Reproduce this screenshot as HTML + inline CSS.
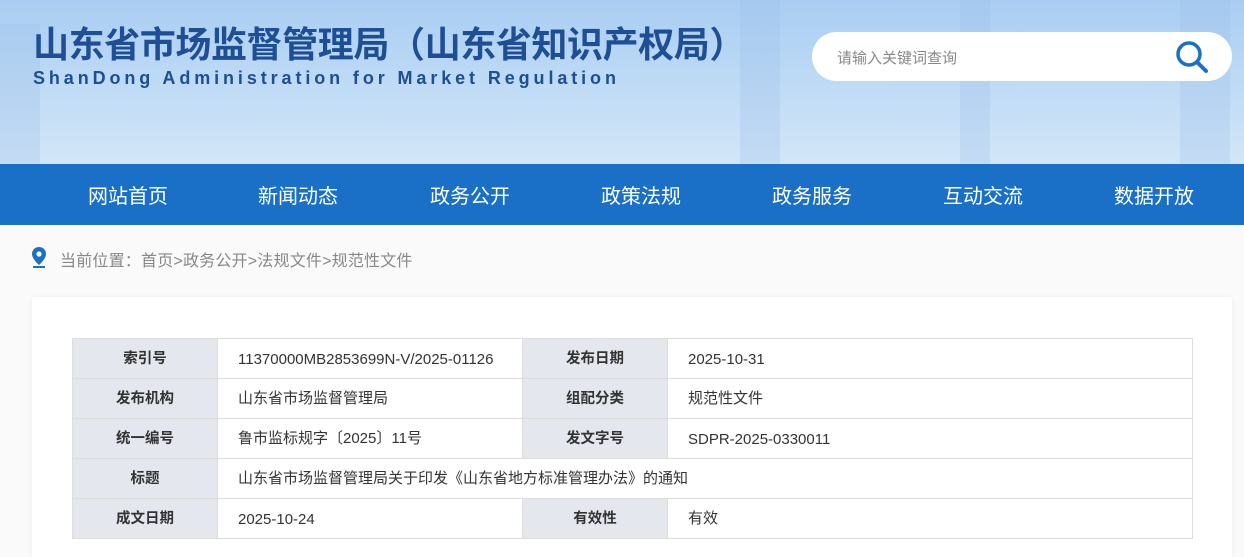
<!DOCTYPE html>
<html><head><meta charset="utf-8"><style>
*{margin:0;padding:0;box-sizing:border-box}
body{width:1244px;height:546px;overflow:hidden;background:#fafafa;font-family:"Liberation Sans","Noto Sans CJK SC",sans-serif;position:relative}
.hd{position:absolute;left:0;top:0;width:1244px;height:164px;background:linear-gradient(180deg,#a9cdf2 0%,#bcd9f5 45%,#d3e6f8 100%)}
.city{position:absolute;bottom:0;background:rgba(150,188,230,.25)}
.t1{position:absolute;left:33px;top:16px;font-size:36px;font-weight:bold;color:#1e4e93;letter-spacing:-0.4px;white-space:nowrap}
.t2{position:absolute;left:33px;top:68px;font-size:18px;font-weight:bold;color:#1e4e93;letter-spacing:3.9px;white-space:nowrap}
.sr{position:absolute;left:812px;top:32px;width:420px;height:49px;background:#fff;border-radius:25px}
.sr span{position:absolute;left:25px;top:15px;font-size:15px;color:#888}
.sr svg{position:absolute;right:22px;top:7px}
.nav{position:absolute;left:0;top:164px;width:1244px;height:61px;background:#1a70c6}
.nav span{position:absolute;top:16px;font-size:20px;color:#fff}
.bc{position:absolute;left:60px;top:247px;font-size:16px;letter-spacing:0.2px;color:#888}
.card{position:absolute;left:32px;top:297px;width:1200px;height:260px;background:#fff;box-shadow:0 0 6px rgba(0,0,0,.06)}
table{position:absolute;left:72px;top:338px;border-collapse:collapse;font-size:15px;color:#333}
td{height:40px;border:1px solid #ddd;padding:0 20px;line-height:20px;vertical-align:middle}
td.k{background:#e4e8ee;text-align:center;font-weight:bold;padding:0;font-size:14.5px}
.n{display:inline-block;vertical-align:middle;line-height:20px;position:relative;top:1px}
</style></head><body>
<div class="hd">
<div class="city" style="left:0;width:40px;height:140px"></div>
<div class="city" style="left:740px;width:40px;height:164px"></div>
<div class="city" style="left:960px;width:30px;height:164px"></div>
<div class="city" style="left:1180px;width:50px;height:164px"></div>
<div class="t1">山东省市场监督管理局（山东省知识产权局）</div>
<div class="t2">ShanDong Administration for Market Regulation</div>
<div class="sr"><span>请输入关键词查询</span><svg width="36" height="36" viewBox="0 0 36 36"><circle cx="15" cy="15" r="11" fill="none" stroke="#1a70c6" stroke-width="3.5"/><path d="M23 23l9 9" stroke="#1a70c6" stroke-width="4" stroke-linecap="round"/></svg></div>
</div>
<div class="nav">
<span style="left:88px">网站首页</span><span style="left:258px">新闻动态</span><span style="left:430px">政务公开</span><span style="left:601px">政策法规</span><span style="left:772px">政务服务</span><span style="left:943px">互动交流</span><span style="left:1114px">数据开放</span>
</div>
<svg style="position:absolute;left:30px;top:246px" width="18" height="22" viewBox="0 0 18 22"><path d="M9 1a7 7 0 0 0-7 7c0 5 7 11 7 11s7-6 7-11a7 7 0 0 0-7-7z" fill="#1a70c6"/><circle cx="9" cy="8" r="2.6" fill="#fff"/><rect x="3" y="20" width="12" height="2" fill="#1a70c6"/></svg>
<div class="bc">当前位置：首页&gt;政务公开&gt;法规文件&gt;规范性文件</div>
<div class="card"></div>
<table>
<tr><td class="k" style="width:145px">索引号</td><td style="width:305px;white-space:nowrap"><span class="n">11370000MB2853699N-V/2025-01126</span></td><td class="k" style="width:145px">发布日期</td><td style="width:525px"><span class="n">2025-10-31</span></td></tr>
<tr><td class="k">发布机构</td><td>山东省市场监督管理局</td><td class="k">组配分类</td><td>规范性文件</td></tr>
<tr><td class="k">统一编号</td><td>鲁市监标规字〔2025〕11号</td><td class="k">发文字号</td><td><span class="n">SDPR-2025-0330011</span></td></tr>
<tr><td class="k">标题</td><td colspan="3">山东省市场监督管理局关于印发《山东省地方标准管理办法》的通知</td></tr>
<tr><td class="k">成文日期</td><td><span class="n">2025-10-24</span></td><td class="k">有效性</td><td>有效</td></tr>
</table>
</body></html>
